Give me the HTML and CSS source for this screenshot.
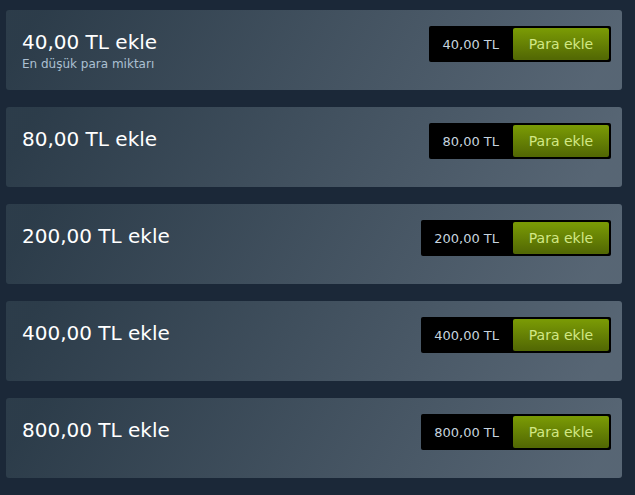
FILE: index.html
```html
<!DOCTYPE html>
<html lang="tr">
<head>
<meta charset="utf-8">
<link rel="stylesheet" href="styles.css">
</head>
<body>
<div class="list">
  <div class="card">
    <div class="info">
      <h1 class="title">40,00 TL ekle</h1>
      <div class="sub">En düşük para miktarı</div>
    </div>
    <div class="action">
      <div class="price">40,00 TL</div>
      <a class="btn">Para ekle</a>
    </div>
  </div>
  <div class="card">
    <div class="info">
      <h1 class="title">80,00 TL ekle</h1>
    </div>
    <div class="action">
      <div class="price">80,00 TL</div>
      <a class="btn">Para ekle</a>
    </div>
  </div>
  <div class="card">
    <div class="info">
      <h1 class="title">200,00 TL ekle</h1>
    </div>
    <div class="action">
      <div class="price">200,00 TL</div>
      <a class="btn">Para ekle</a>
    </div>
  </div>
  <div class="card">
    <div class="info">
      <h1 class="title">400,00 TL ekle</h1>
    </div>
    <div class="action">
      <div class="price">400,00 TL</div>
      <a class="btn">Para ekle</a>
    </div>
  </div>
  <div class="card">
    <div class="info">
      <h1 class="title">800,00 TL ekle</h1>
    </div>
    <div class="action">
      <div class="price">800,00 TL</div>
      <a class="btn">Para ekle</a>
    </div>
  </div>
</div>
</body>
</html>
```
FILE: styles.css
```css
html, body {
  margin: 0;
  padding: 0;
  background: #1b2838;
}
body {
  font-family: "DejaVu Sans", "Liberation Sans", Arial, sans-serif;
}
.list {
  display: flex;
  flex-direction: column;
  gap: 17px;
  padding: 10px 13px 0 6px;
}
.card {
  box-sizing: border-box;
  height: 80px;
  display: flex;
  justify-content: space-between;
  align-items: flex-start;
  padding: 16px 11px 0 16px;
  border-radius: 3px;
  background: #1b2838 linear-gradient(-60deg, rgba(226,244,255,0.3) 5%, rgba(84,107,115,0.3) 95%);
}
.info {
  padding-top: 3px;
}
.title {
  margin: 0;
  font-size: 20px;
  font-weight: 400;
  line-height: 26px;
  color: #ffffff;
}
.sub {
  margin-top: 1px;
  font-size: 12px;
  line-height: 16px;
  color: #acc0d2;
}
.action {
  display: flex;
  align-items: center;
  height: 36px;
  box-sizing: border-box;
  padding: 2px;
  padding-left: 0;
  background: #000;
  border-radius: 2px;
}
.price {
  padding: 0 14px 0 13px;
  font-size: 13px;
  color: #c6d4df;
}
.btn {
  display: flex;
  align-items: center;
  justify-content: center;
  width: 96px;
  height: 32px;
  border-radius: 2px;
  font-size: 14px;
  color: #d2e885;
  background: linear-gradient(to bottom, #799905 5%, #536904 95%);
  cursor: pointer;
}
```
